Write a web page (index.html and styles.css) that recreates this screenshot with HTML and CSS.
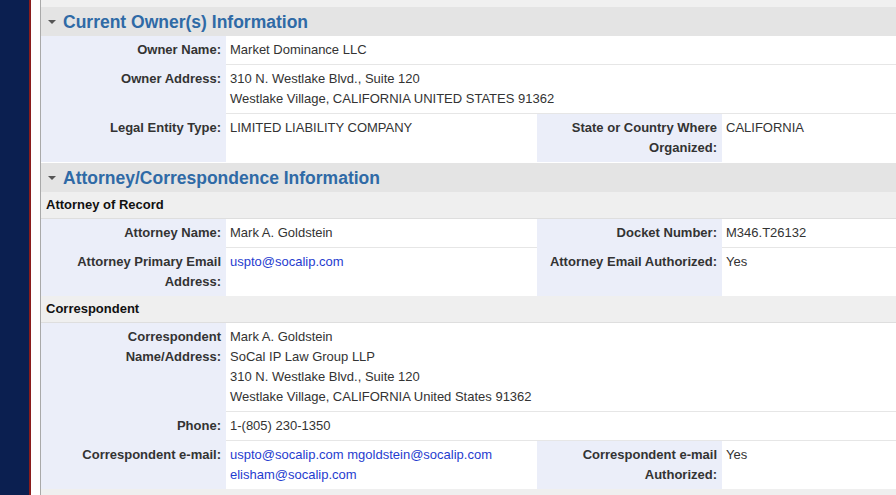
FILE: index.html
```html
<!DOCTYPE html>
<html lang="en">
<head>
<meta charset="utf-8">
<title>Owner and Attorney Information</title>
<link rel="stylesheet" href="styles.css">
</head>
<body>
<div class="page">
  <div class="sidebar"></div>
  <div class="redline"></div>
  <div class="gutter"></div>
  <main class="main">
    <div class="topstrip"></div>

    <section class="section">
      <h2 class="sec-head"><span class="caret"></span>Current Owner(s) Information</h2>
      <div class="grid">
        <div class="lbl">Owner Name:</div>
        <div class="val span3">Market Dominance LLC</div>

        <div class="lbl">Owner Address:</div>
        <div class="val span3">310 N. Westlake Blvd., Suite 120<br>Westlake Village, CALIFORNIA UNITED STATES 91362</div>

        <div class="lbl last">Legal Entity Type:</div>
        <div class="val last">LIMITED LIABILITY COMPANY</div>
        <div class="lbl last">State or Country Where Organized:</div>
        <div class="val last">CALIFORNIA</div>
      </div>
    </section>

    <section class="section">
      <h2 class="sec-head"><span class="caret"></span>Attorney/Correspondence Information</h2>
      <h3 class="sub-head">Attorney of Record</h3>
      <div class="grid">
        <div class="lbl">Attorney Name:</div>
        <div class="val">Mark A. Goldstein</div>
        <div class="lbl">Docket Number:</div>
        <div class="val">M346.T26132</div>

        <div class="lbl last">Attorney Primary Email Address:</div>
        <div class="val last"><a href="#">uspto@socalip.com</a></div>
        <div class="lbl last">Attorney Email Authorized:</div>
        <div class="val last">Yes</div>
      </div>
      <h3 class="sub-head">Correspondent</h3>
      <div class="grid">
        <div class="lbl">Correspondent Name/Address:</div>
        <div class="val span3">Mark A. Goldstein<br>SoCal IP Law Group LLP<br>310 N. Westlake Blvd., Suite 120<br>Westlake Village, CALIFORNIA United States 91362</div>

        <div class="lbl">Phone:</div>
        <div class="val span3">1-(805) 230-1350</div>

        <div class="lbl last">Correspondent e-mail:</div>
        <div class="val last"><a href="#">uspto@socalip.com</a> <a href="#">mgoldstein@socalip.com</a> <a href="#">elisham@socalip.com</a></div>
        <div class="lbl last">Correspondent e-mail Authorized:</div>
        <div class="val last">Yes</div>
      </div>
      <div class="bottomstrip"></div>
    </section>
  </main>
</div>
</body>
</html>
```

FILE: styles.css
```css
html, body {
  margin: 0;
  padding: 0;
  background: #ffffff;
  overflow: hidden;
}

body {
  font-family: "Liberation Sans", Arial, sans-serif;
  font-size: 13px;
  color: #333333;
}

.page {
  display: flex;
  height: 495px;
  width: 896px;
  overflow: hidden;
}

.sidebar {
  width: 29px;
  flex: none;
  background: #0b1f50;
}

.redline {
  width: 2px;
  flex: none;
  background: #8a1c1c;
}

.gutter {
  width: 9px;
  flex: none;
  background: #ffffff;
}

.main {
  flex: none;
  width: 1040px;
  border-left: 1px solid #a9a9a9;
  background: #ffffff;
}

.topstrip {
  height: 7px;
  background: #f0f0f0;
}

.section {
  margin: 0;
}

.section + .section {
  margin-top: 1px;
}

.sec-head {
  margin: 0;
  height: 29px;
  line-height: 28px;
  background: #e4e4e4;
  color: #2f6aa6;
  font-size: 17.5px;
  font-weight: bold;
  display: flex;
  align-items: center;
  padding-left: 7px;
}

.caret {
  width: 0;
  height: 0;
  border-left: 4px solid transparent;
  border-right: 4px solid transparent;
  border-top: 4px solid #555555;
  margin-right: 7px;
  margin-top: 1px;
}

.sub-head {
  margin: 0;
  height: 26px;
  line-height: 26px;
  background: #efefef;
  border-bottom: 1px solid #dedede;
  color: #111111;
  font-size: 13px;
  font-weight: bold;
  padding-left: 5px;
}

.grid {
  display: grid;
  grid-template-columns: 185px 311px 185px 1fr;
}

.lbl,
.val {
  padding: 4px 4px;
  line-height: 20px;
}

.lbl {
  background: #ebeef9;
  font-weight: bold;
  text-align: right;
  padding-right: 5px;
  border-bottom: 1px solid #ebeef9;
}

.val {
  background: #ffffff;
  border-bottom: 1px solid #e6e6e6;
}

.lbl.last,
.val.last {
  border-bottom: none;
}

.span3 {
  grid-column: span 3;
}

.val a {
  color: #1f3ccf;
  text-decoration: none;
}

.bottomstrip {
  height: 6px;
  background: #efefef;
}
```
